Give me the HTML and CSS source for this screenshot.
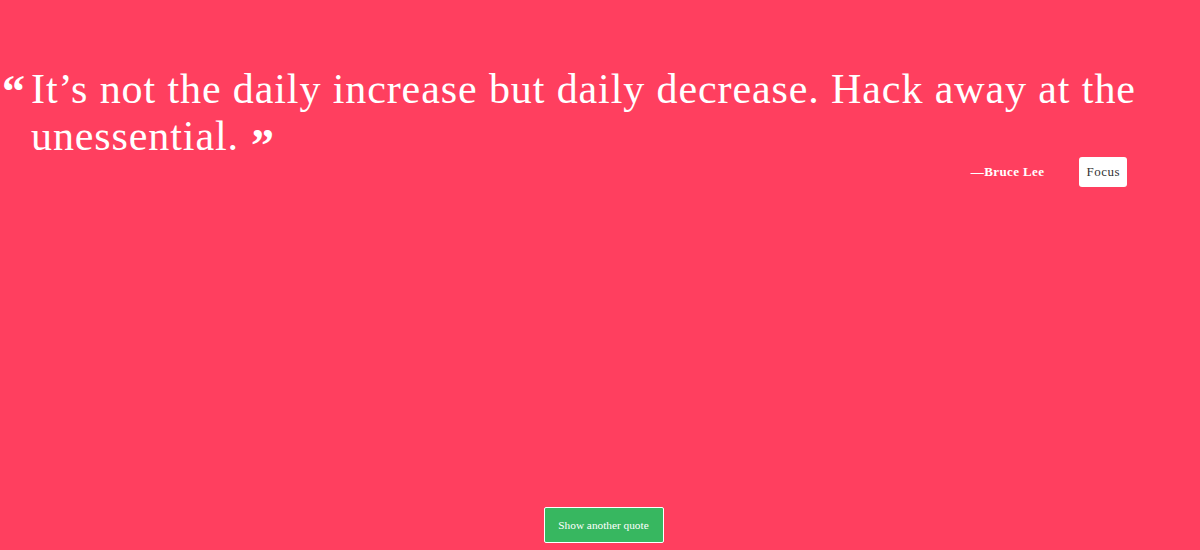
FILE: index.html
```html
<!DOCTYPE html>
<html>
<head>
<meta charset="utf-8">
<link rel="stylesheet" href="styles.css">
</head>
<body>
<main class="page">
  <section class="quote-box">
    <blockquote class="quote">
      <span class="mark open">&ldquo;</span>It&rsquo;s not the daily increase but daily decrease. Hack away at the unessential.<span class="mark close">&rdquo;</span>
    </blockquote>
    <div class="meta">
      <span class="author">&mdash;Bruce Lee</span>
      <span class="tag">Focus</span>
    </div>
  </section>
  <div class="actions">
    <button class="btn">Show another quote</button>
  </div>
</main>
</body>
</html>
```
FILE: styles.css
```css
html, body {
  margin: 0;
  padding: 0;
  background: #ff3f5f;
}
body {
  font-family: "Liberation Serif", "DejaVu Serif", serif;
  color: #fff;
}
.page {
  height: 550px;
  display: flex;
  flex-direction: column;
  justify-content: space-between;
}
.quote-box {
  padding-top: 66px;
  width: 1140px;
}
.quote {
  margin: 0;
  padding-left: 31px;
  font-size: 42px;
  line-height: 47px;
  letter-spacing: 0.9px;
  position: relative;
}
.mark {
  font-weight: bold;
  font-size: 46px;
  line-height: 0;
  letter-spacing: 0;
}
.open {
  position: absolute;
  left: 2px;
  top: 26px;
}
.close {
  margin-left: 12px;
  vertical-align: -11px;
}
.meta {
  display: flex;
  justify-content: flex-end;
  align-items: center;
  gap: 35px;
  margin-top: -3px;
  padding-right: 13px;
}
.author {
  font-size: 13px;
  font-weight: bold;
  letter-spacing: 0.4px;
}
.tag {
  background: #fff;
  color: #333;
  font-size: 13px;
  letter-spacing: 0.5px;
  padding: 7px 7px;
  border-radius: 3px;
}
.actions {
  display: flex;
  justify-content: center;
  padding-bottom: 7px;
  padding-left: 7px;
}
.btn {
  background: #37b760;
  color: #fff;
  border: 1px solid #fff;
  border-radius: 2px;
  font-family: "Liberation Serif", serif;
  font-size: 11.3px;
  width: 120px;
  height: 36px;
  padding: 0;
}
```
